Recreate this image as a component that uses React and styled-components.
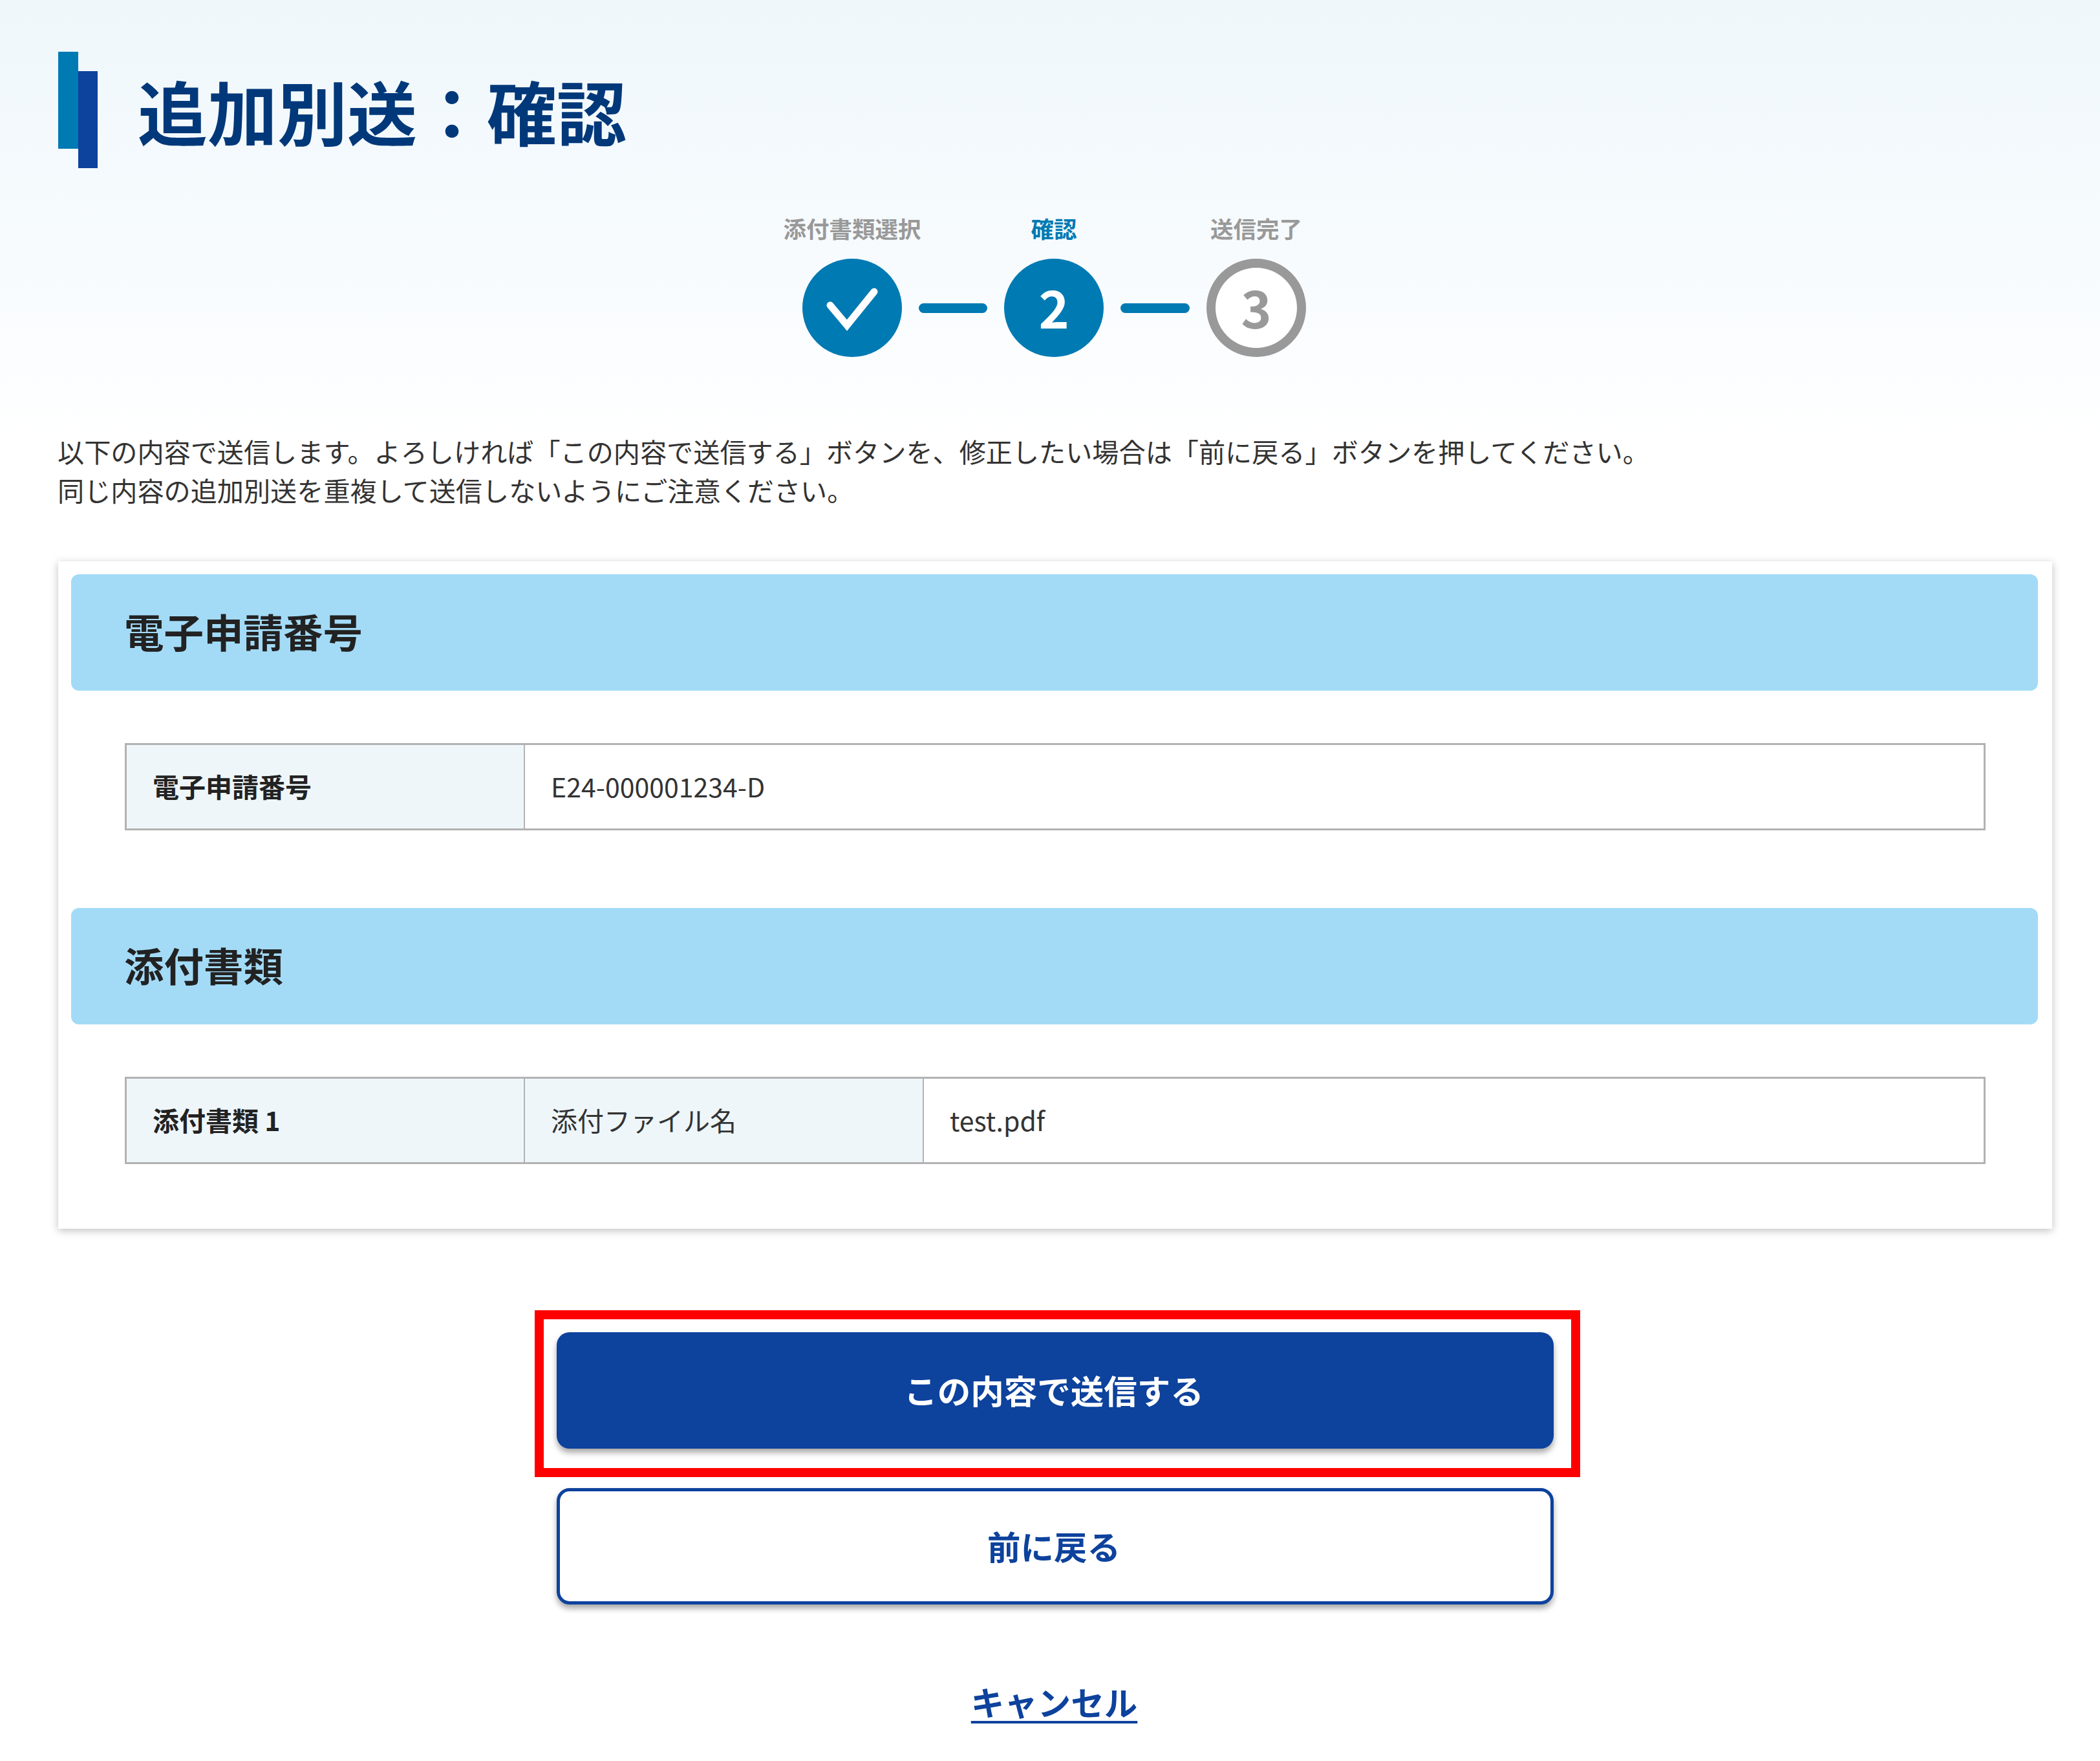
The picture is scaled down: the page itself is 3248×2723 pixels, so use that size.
import React from "react";
import styled, { createGlobalStyle } from "styled-components";

const Global = createGlobalStyle`
  html, body { margin: 0; padding: 0; background: #fff; }
  body { font-family: "Noto Sans CJK JP", "Noto Sans", sans-serif; color: #333; }
`;

const Page = styled.div`
  width: 3248px;
  height: 2723px;
  overflow: hidden;
  padding-top: 80px;
  box-sizing: border-box;
  background: linear-gradient(180deg, #eff7fb 0, #f7fbfe 400px, #fff 690px);
`;

const Header = styled.header`
  display: flex;
  align-items: center;
  gap: 62px;
  padding-left: 90px;
  height: 180px;
`;

const Mark = styled.div`
  display: flex;
  height: 180px;
`;

const MarkBar = styled.span`
  width: 30.5px;
  height: 150px;
  background: ${(p) => p.$color};
  margin-top: ${(p) => p.$top}px;
`;

const Title = styled.h1`
  margin: 0;
  font-size: 108px;
  line-height: 1;
  font-weight: 700;
  color: #00387a;
`;

const Stepper = styled.div`
  display: flex;
  justify-content: center;
  align-items: flex-end;
  margin: 71px 0 0 0;
  padding-left: 13px;
`;

const Step = styled.div`
  display: flex;
  flex-direction: column;
  align-items: center;
  width: 154px;
`;

const StepLabel = styled.div`
  font-size: 35.5px;
  line-height: 44px;
  font-weight: 700;
  white-space: nowrap;
  margin-bottom: 25px;
  color: ${(p) => (p.$active ? "#007ab3" : "#999")};
`;

const Circle = styled.div`
  width: 154px;
  height: 152px;
  box-sizing: border-box;
  padding-bottom: ${(p) => (p.$digit ? "6px" : "0")};
  border-radius: 50%;
  display: flex;
  align-items: center;
  justify-content: center;
  font-size: 80px;
  line-height: 1;
  font-weight: 700;
  color: ${(p) => (p.$todo ? "#999" : "#fff")};
  background: ${(p) => (p.$todo ? "#fff" : "#007ab3")};
  border: ${(p) => (p.$todo ? "14px solid #999" : "none")};
`;

const Connector = styled.span`
  width: ${(p) => p.$w}px;
  height: 15px;
  margin: 0 26px 68px;
  border-radius: 8px;
  background: #007ab3;
`;

const Intro = styled.p`
  margin: 115px 0 0 89px;
  font-size: 41.15px;
  line-height: 60px;
  color: #333;
  white-space: nowrap;
`;

const Panel = styled.section`
  margin: 81px 0 0 90px;
  width: 3084px;
  height: 1032px;
  box-sizing: border-box;
  padding: 20px 22px 20px 20px;
  background: #fff;
  box-shadow: 0 3px 12px rgba(0, 0, 0, 0.25);
`;

const SectionHead = styled.h2`
  margin: 0;
  height: 180px;
  box-sizing: border-box;
  padding: 0 0 6px 82px;
  display: flex;
  align-items: center;
  background: #a3dbf7;
  border-radius: 12px;
  font-size: 61.5px;
  font-weight: 700;
  color: #222;
`;

const Table = styled.div`
  margin: 81px 81px ${(p) => p.$after}px 83px;
  height: 135px;
  box-sizing: border-box;
  border: 3px solid #b2b2b2;
  display: grid;
  grid-template-columns: ${(p) => p.$cols};
`;

const Cell = styled.div`
  display: flex;
  align-items: center;
  padding: 0 0 4px 40px;
  font-size: 41px;
  font-weight: ${(p) => (p.$strong ? 700 : 400)};
  color: ${(p) => (p.$strong ? "#222" : "#333")};
  background: ${(p) => (p.$shade ? "#eef6fa" : "#fff")};
  border-left: ${(p) => (p.$first ? "none" : "2px solid #b2b2b2")};
`;

const Actions = styled.div`
  margin: 160px 0 0 90px;
  width: 3084px;
  display: flex;
  flex-direction: column;
  align-items: center;
`;

const PrimaryWrap = styled.div`
  position: relative;
  margin-bottom: 61px;
`;

const Annotation = styled.div`
  position: absolute;
  top: -34px;
  left: -34px;
  right: -41px;
  bottom: -44px;
  border: 14px solid #ff0000;
  pointer-events: none;
`;

const Button = styled.button`
  display: block;
  width: 1542px;
  height: 180px;
  box-sizing: border-box;
  padding: 0 4px 3px 0;
  border-radius: 20px;
  font-family: inherit;
  font-size: 51.5px;
  font-weight: 700;
  color: ${(p) => (p.$primary ? "#fff" : "#0d429d")};
  background: ${(p) => (p.$primary ? "#0d429d" : "#fff")};
  border: ${(p) => (p.$primary ? "none" : "5px solid #0d429d")};
  box-shadow: 0 6px 10px rgba(0, 0, 0, 0.35);
`;

const Cancel = styled.a`
  margin-top: 113px;
  padding-right: 3px;
  font-size: 51.5px;
  line-height: 74px;
  font-weight: 700;
  color: #0d429d;
  text-decoration: underline;
  text-underline-offset: 8px;
  text-decoration-thickness: 4px;
`;

const CheckMark = () => (
  <svg width="154" height="152" viewBox="0 0 154 152" fill="none">
    <path d="M43 72 L69 103 L111 51" stroke="#fff" strokeWidth="11" strokeLinecap="round" strokeLinejoin="miter" />
  </svg>
);

export default function App() {
  return (
    <Page>
      <Global />
      <Header>
        <Mark>
          <MarkBar $color="#007ab3" $top={0} />
          <MarkBar $color="#0d429d" $top={30} />
        </Mark>
        <Title>{"追加別送\uFF1A確認"}</Title>
      </Header>

      <Stepper>
        <Step>
          <StepLabel>添付書類選択</StepLabel>
          <Circle><CheckMark /></Circle>
        </Step>
        <Connector $w={106} />
        <Step>
          <StepLabel $active>確認</StepLabel>
          <Circle $digit>2</Circle>
        </Step>
        <Connector $w={107} />
        <Step>
          <StepLabel>送信完了</StepLabel>
          <Circle $todo $digit>3</Circle>
        </Step>
      </Stepper>

      <Intro>
        以下の内容で送信します。よろしければ「この内容で送信する」ボタンを、修正したい場合は「前に戻る」ボタンを押してください。
        <br />
        同じ内容の追加別送を重複して送信しないようにご注意ください。
      </Intro>

      <Panel>
        <SectionHead>電子申請番号</SectionHead>
        <Table $cols="614px 1fr" $after={120}>
          <Cell $first $shade $strong>電子申請番号</Cell>
          <Cell>E24-000001234-D</Cell>
        </Table>
        <SectionHead>添付書類</SectionHead>
        <Table $cols="614px 617px 1fr" $after={0}>
          <Cell $first $shade $strong>添付書類 1</Cell>
          <Cell $shade>添付ファイル名</Cell>
          <Cell>test.pdf</Cell>
        </Table>
      </Panel>

      <Actions>
        <PrimaryWrap>
          <Button $primary>この内容で送信する</Button>
          <Annotation />
        </PrimaryWrap>
        <Button>前に戻る</Button>
        <Cancel>キャンセル</Cancel>
      </Actions>
    </Page>
  );
}
